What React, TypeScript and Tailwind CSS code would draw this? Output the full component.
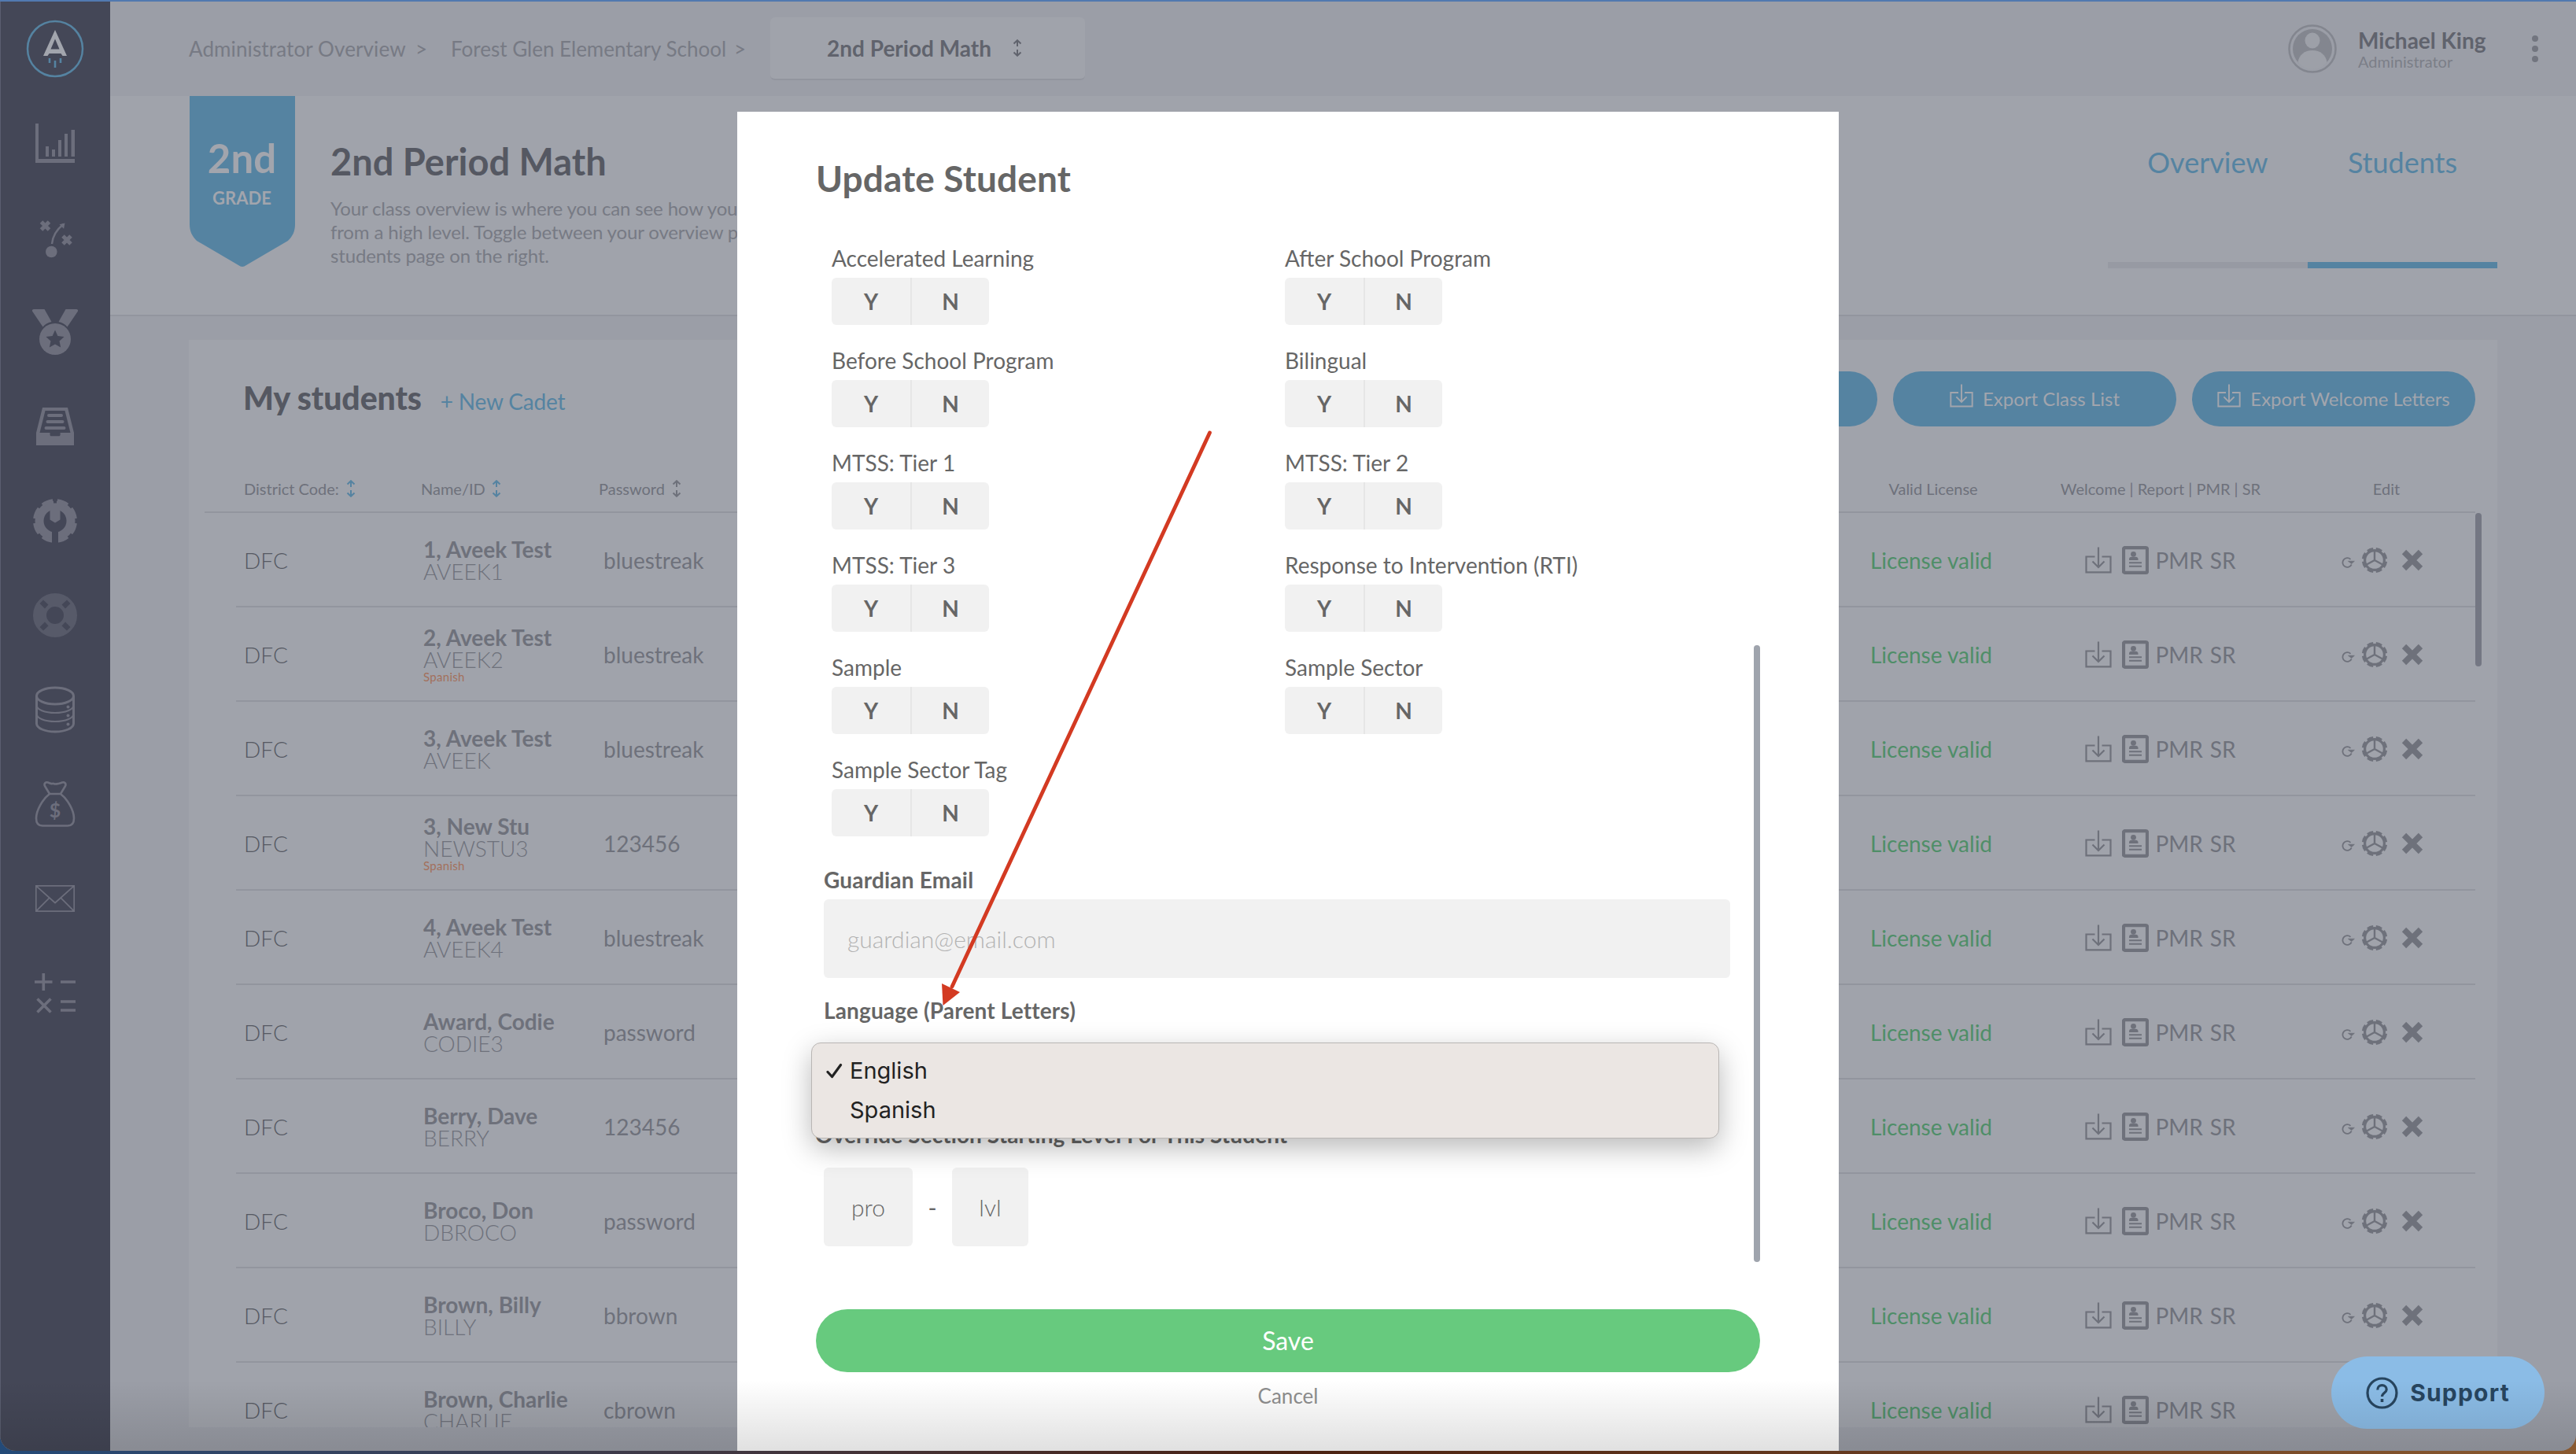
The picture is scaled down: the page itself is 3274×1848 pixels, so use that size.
import * as React from 'react';

interface Student {
  name: string;
  id: string;
  password: string;
  language?: string;
}

const students: Student[] = [
  { name: '1, Aveek Test', id: 'AVEEK1', password: 'bluestreak' },
  { name: '2, Aveek Test', id: 'AVEEK2', password: 'bluestreak', language: 'Spanish' },
  { name: '3, Aveek Test', id: 'AVEEK', password: 'bluestreak' },
  { name: '3, New Stu', id: 'NEWSTU3', password: '123456', language: 'Spanish' },
  { name: '4, Aveek Test', id: 'AVEEK4', password: 'bluestreak' },
  { name: 'Award, Codie', id: 'CODIE3', password: 'password' },
  { name: 'Berry, Dave', id: 'BERRY', password: '123456' },
  { name: 'Broco, Don', id: 'DBROCO', password: 'password' },
  { name: 'Brown, Billy', id: 'BILLY', password: 'bbrown' },
  { name: 'Brown, Charlie', id: 'CHARLIE', password: 'cbrown' },
];

const programs = [
  'Accelerated Learning',
  'After School Program',
  'Before School Program',
  'Bilingual',
  'MTSS: Tier 1',
  'MTSS: Tier 2',
  'MTSS: Tier 3',
  'Response to Intervention (RTI)',
  'Sample',
  'Sample Sector',
  'Sample Sector Tag',
];

const SortIcon = ({ className }: { className?: string }) => (
  <svg className={className} width="12" height="22" viewBox="0 0 12 22" fill="none" stroke="currentColor" strokeWidth="2">
    <path d="M6 9V1.5M1.5 5.5 6 1.2l4.500 4.300M6 13v7.500M1.500 16.500 6 20.800l4.500-4.300" />
  </svg>
);

const DownloadIcon = ({ size }: { size: number }) => (
  <svg width={size} height={size} viewBox="0 0 34 34" fill="none" stroke="currentColor" strokeWidth="2.2">
    <path d="M12.500 12.500H1.500v19.800h31V12.500h-11M17 0.500v25M9.500 18.500l7.500 7.500 7.500-7.500" />
  </svg>
);

const ReportIcon = () => (
  <svg width="34" height="36" viewBox="0 0 34 36" fill="currentColor">
    <rect x="2" y="2.200" width="30" height="31.600" rx="1.500" fill="none" stroke="currentColor" strokeWidth="4.200" />
    <circle cx="14.500" cy="10.300" r="3.400" />
    <path d="M9 18v-1.500c0-2 1.500-2.800 3-2.800h5.500c1.500 0 3 .8 3 2.800V18z" />
    <path d="M9 20.200h16v2H9zM9 24.700h16v2H9z" />
  </svg>
);

const GearIcon = () => (
  <svg width="34" height="34" viewBox="0 0 34 34" fill="none" stroke="currentColor">
    <circle cx="17" cy="17" r="12.400" strokeWidth="3.200" />
    <circle cx="17" cy="17" r="14.800" strokeWidth="2.800" pathLength="80" strokeDasharray="6.800 3.200" strokeDashoffset="-1.600" />
    <path d="M17 5v12.500M17 17l-11 6M17 17l11 6" strokeWidth="2.400" />
  </svg>
);

const RefreshIcon = () => (
  <svg width="17" height="14" viewBox="0 0 17 14" fill="none" stroke="currentColor" strokeWidth="1.800">
    <path d="M11.500 2.800A5.900 5.900 0 1 0 12.700 9.500" />
    <path d="M12.700 8.500 8.500 5.300h7.800z" fill="currentColor" strokeWidth="0.800" />
  </svg>
);

const CloseIcon = () => (
  <svg width="28" height="28" viewBox="0 0 28 28" stroke="currentColor" strokeWidth="7.500">
    <path d="M3.500 3.500l21 21M24.500 3.500l-21 21" />
  </svg>
);

const Logo = () => (
  <svg width="74" height="74" viewBox="0 0 74 74" fill="none">
    <circle cx="37" cy="37" r="35" stroke="#5583a1" strokeWidth="2.500" />
    <path d="M37 13 52 46H46.500L44.500 43H29.500L27.500 46H22zM37 24.500 31.500 37.500h11z" fill="#a2a5ad" fillRule="evenodd" />
    <path d="M30 49v6M37 52v9M44 49v6" stroke="#5583a1" strokeWidth="2.600" />
  </svg>
);

const NavIcon = ({ children, dim }: { children: React.ReactNode; dim?: boolean }) => (
  <div className="h-[120px] flex items-center justify-center">
    <svg
      width="60"
      height="60"
      viewBox="0 0 60 60"
      fill="none"
      stroke="none"
      className={dim ? 'text-[#575a69]' : 'text-[#6c6e7c]'}
    >
      {children}
    </svg>
  </div>
);

const Sidebar = () => (
  <aside className="w-[140px] shrink-0 pr-px bg-[#444757] border-l border-[#5a5e70]">
    <div className="h-[120px] flex items-center justify-center">
      <Logo />
    </div>
    <NavIcon>
      <path
        d="M5 5h4v45h46v5H5zM18 34h4v13h-4zM26 38h4v9h-4zM34 26h4v21h-4zM42 18h4v29h-4zM50.500 13h4.500v34h-4.500z"
        fill="currentColor"
      />
    </NavIcon>
    <NavIcon>
      <path d="M12.500 10l10 10M22.500 10l-10 10M40 28l10 10M50 28l-10 10" stroke="currentColor" strokeWidth="5" />
      <circle cx="25.300" cy="48" r="7.300" fill="currentColor" />
      <path d="M26 38C27 27 33 19 40.500 13" stroke="currentColor" strokeWidth="2.400" />
      <path d="M42.500 11.500l-7 1.800 5.600 5.400z" fill="currentColor" />
    </NavIcon>
    <NavIcon>
      <path d="M1 3.500C.5 2 1.500 1 3 1h13.500l9 16c-5 1-8.500 3.500-11 6.500zM59 3.500C59.500 2 58.500 1 57 1H43.500l-9 16c5 1 8.500 3.500 11 6.500z" fill="currentColor" />
      <circle cx="30" cy="39" r="20" fill="currentColor" />
      <path d="M30 27.500l3.400 7.500 8.100.9-6 5.500 1.700 8L30 45.400l-7.200 4 1.700-8-6-5.500 8.100-.9z" fill="#444757" />
    </NavIcon>
    <NavIcon>
      <path d="M14 6h32l8 32v16H6V38zM17.500 10 10.500 38h13v2.500c0 1 .8 1.800 1.800 1.800h9.500c1 0 1.800-.8 1.800-1.800V38h12.900L42.500 10z" fill="currentColor" fillRule="evenodd" />
      <path d="M22 16h16M20.500 24h19M18.500 32h23" stroke="currentColor" strokeWidth="4" strokeLinecap="round" />
    </NavIcon>
    <NavIcon>
      <circle cx="30" cy="30" r="20" stroke="currentColor" strokeWidth="11" />
      <circle cx="30" cy="30" r="25.500" stroke="currentColor" strokeWidth="5" pathLength="80" strokeDasharray="7 3" strokeDashoffset="-1.500" />
      <path d="M26 44h8v16h-8z" fill="#444757" />
      <path d="M23.500 6h13v22.500L30 32.500l-6.500-4z" fill="currentColor" />
      <path d="M30 1.500v6" stroke="#444757" strokeWidth="4" />
    </NavIcon>
    <NavIcon dim>
      <circle cx="30" cy="30" r="19.500" stroke="currentColor" strokeWidth="17" />
      <path
        d="M15 10.500l6.500 6-4.500 5-6.500-6.500zM45 10.500l-6.500 6 4.500 5 6.500-6.500zM15 49.500l6.500-6-4.500-5-6.500 6.500zM45 49.500l-6.500-6 4.500-5 6.500 6.500z"
        fill="#444757"
      />
    </NavIcon>
    <NavIcon>
      <ellipse cx="30" cy="12.500" rx="23.500" ry="10.500" stroke="currentColor" strokeWidth="3" />
      <path d="M6.500 12.500v35c0 6 10.500 10.500 23.500 10.500s23.500-4.500 23.500-10.500v-35" stroke="currentColor" strokeWidth="3" />
      <path d="M6.500 24c0 6 10.500 10 23.500 10s23.500-4 23.500-10M6.500 35c0 6 10.500 10 23.500 10s23.500-4 23.500-10" stroke="currentColor" strokeWidth="2" />
      <circle cx="46.500" cy="26.500" r="2" fill="currentColor" />
      <circle cx="46.500" cy="37.500" r="2" fill="currentColor" />
      <circle cx="46.500" cy="48.500" r="2" fill="currentColor" />
    </NavIcon>
    <NavIcon>
      <path
        d="M23 17 17 7c-1.500-3 1-5.500 4-4.500 3 1 3.500 2 5.500 1.500S29 4.500 30 4.500s2 0 4-.5 2.500-.5 5-1.500c3-1 5.500 1.500 4 4.500L37 17zM23 17C14 24 6 38 6 48c0 7 3 9.500 8 9.500h32c5 0 8-2.500 8-9.500 0-10-8-24-17-31"
        stroke="currentColor"
        strokeWidth="2.600"
      />
      <text x="30" y="47" textAnchor="middle" fill="currentColor" fontSize="25" fontWeight="700" fontFamily="Lato, sans-serif">
        $
      </text>
    </NavIcon>
    <NavIcon>
      <path d="M5.800 13.800h48.400v32.400H5.800zM5.800 13.800 30 35.500l24.200-21.700M5.800 46.200l17-17M54.200 46.200l-17-17" stroke="currentColor" strokeWidth="1.700" />
    </NavIcon>
    <NavIcon>
      <path d="M4 16h22.500M15.300 5v22M37 16h19M7.500 37.500l17 17M24.500 37.500l-17 17M37 41h19M37 52h19" stroke="currentColor" strokeWidth="3.600" />
    </NavIcon>
  </aside>
);

const Header = () => (
  <header className="h-[120px] shrink-0 flex items-center pl-[100px] pr-[48px] text-[26px] text-[#777a84]">
    <span className="w-[288px] tracking-[0.12px]">Administrator Overview</span>
    <span className="w-[45px]">&gt;</span>
    <span className="w-[360px]">Forest Glen Elementary School</span>
    <span className="w-[46px]">&gt;</span>
    <div className="w-[400px] h-[80px] flex items-center pl-[72px] rounded-md bg-[#a0a3ab] border-b-2 border-[#92959e] text-[28px] font-bold text-[#60636d]">
      <span className="w-[236px]">2nd Period Math</span>
      <SortIcon />
    </div>
    <div className="ml-auto flex items-center">
      <svg className="mr-[-1px]" width="62" height="62" viewBox="0 0 62 62" fill="none">
        <circle cx="31" cy="31" r="29.500" stroke="#83868f" strokeWidth="2.600" />
        <circle cx="31" cy="31" r="25" fill="#83868f" />
        <ellipse cx="31" cy="20.500" rx="9.500" ry="10" fill="#9da0a8" />
        <path d="M12.500 48C14 39 21 33 31 33s17 6 18.500 15C45 53.500 39 57 31 57s-14-3.500-18.500-9z" fill="#9da0a8" />
      </svg>
      <div className="ml-[28px] w-[221px]">
        <div className="text-[28px] leading-[32px] font-bold text-[#60636d]">Michael King</div>
        <div className="text-[20px] leading-[22px] text-[#7b7e88]">Administrator</div>
      </div>
      <div className="flex flex-col gap-[5px]">
        <div className="w-2 h-2 rounded-full bg-[#72757f]" />
        <div className="w-2 h-2 rounded-full bg-[#72757f]" />
        <div className="w-2 h-2 rounded-full bg-[#72757f]" />
      </div>
    </div>
  </header>
);

const Hero = () => (
  <section className="h-[280px] shrink-0 flex bg-[#a0a3ab] border-b-2 border-[#92959e] pl-[101px] pr-[100px]">
    <div className="relative w-[134px] h-[218px]">
      <svg className="absolute inset-0" width="134" height="218" viewBox="0 0 134 218">
        <path d="M0 0h134v163c0 9-3 15-9 21l-53 31q-5 4-10 0L9 184c-6-6-9-12-9-21z" fill="#5583a1" />
      </svg>
      <div className="relative pt-[49px] pr-px text-center font-bold text-[#a2a5ad]">
        <div className="text-[51px] leading-[60px]">2nd</div>
        <div className="mt-[6px] text-[22px] leading-[30px]">GRADE</div>
      </div>
    </div>
    <div className="ml-[45px] pt-[53px]">
      <h1 className="text-[47px] leading-[60px] font-bold text-[#555862]">2nd Period Math</h1>
      <p className="mt-[15px] w-[760px] text-[24px] leading-[30px] tracking-[-0.15px] text-[#777a84] whitespace-nowrap">
        Your class overview is where you can see how your class is doing
        <br />
        from a high level. Toggle between your overview page and
        <br />
        students page on the right.
      </p>
    </div>
    <nav className="ml-auto flex text-[36px] leading-[44px] text-[#5583a1] text-center">
      <div className="w-[254px] h-[219px] pt-[62px] border-b-8 border-[#979aa3]">Overview</div>
      <div className="w-[241px] h-[219px] pt-[62px] border-b-8 border-[#5583a1]">Students</div>
    </nav>
  </section>
);

const StudentRow = ({ student }: { student: Student }) => (
  <div className="ml-[60px] mr-[28px] h-[120px] shrink-0 flex items-center pl-[10px] pt-[2px] border-b-2 border-[#92959e] text-[28px] leading-[28px] text-[#6e717b]">
    <div className="w-[228px] font-light text-[#555862]">DFC</div>
    <div className="w-[229px]">
      <div className="font-bold">{student.name}</div>
      <div className="font-light">{student.id}</div>
      {student.language && <div className="text-[15px] leading-[16px] tracking-[0.3px] text-[#a3705c]">{student.language}</div>}
    </div>
    <div className="flex-1">{student.password}</div>
    <div className="w-[238px] pr-px text-center text-[#4f8e68]">License valid</div>
    <div className="w-[344px] flex items-center justify-center">
      <DownloadIcon size={34} />
      <span className="ml-[13px]">
        <ReportIcon />
      </span>
      <span className="ml-[8px]">PMR</span>
      <span className="ml-[9px]">SR</span>
    </div>
    <div className="w-[228px] flex items-center pl-[58px]">
      <span className="mt-[6px]">
        <RefreshIcon />
      </span>
      <span className="ml-[8px]">
        <GearIcon />
      </span>
      <span className="ml-[17px]">
        <CloseIcon />
      </span>
    </div>
  </div>
);

const Students = () => (
  <section className="relative mt-[30px] ml-[100px] mr-[100px] h-[1382px] shrink-0 flex flex-col overflow-hidden bg-[#a0a3ab]">
    <div className="mt-10 h-[70px] shrink-0 flex items-center pl-[69px] pr-[28px] gap-5">
      <div className="flex items-baseline mr-auto -mt-[2px]">
        <h2 className="text-[41px] leading-[50px] font-black tracking-[-0.1px] text-[#555862]">My students</h2>
        <a className="ml-[24px] text-[28px] tracking-[-0.2px] text-[#5583a1]">+ New Cadet</a>
      </div>
      <div className="w-[360px] h-[70px] rounded-full bg-[#5583a1]" />
      <button className="w-[360px] h-[70px] rounded-full bg-[#5583a1] flex items-center justify-center gap-3 text-[24px] text-[#a2a5ad]">
        <span className="-mt-2">
          <DownloadIcon size={30} />
        </span>
        Export Class List
      </button>
      <button className="w-[360px] h-[70px] rounded-full bg-[#5583a1] flex items-center justify-center gap-3 text-[24px] text-[#a2a5ad]">
        <span className="-mt-2">
          <DownloadIcon size={30} />
        </span>
        Export Welcome Letters
      </button>
    </div>
    <div className="mt-[60px] ml-5 mr-[28px] h-[50px] shrink-0 flex items-center pl-[50px] pb-[11px] border-b-2 border-[#92959e] text-[20px] text-[#6e717b]">
      <div className="w-[225px] flex items-center gap-[9px]">
        District Code: <SortIcon className="text-[#5583a1]" />
      </div>
      <div className="w-[226px] flex items-center gap-[8px]">
        Name/ID <SortIcon className="text-[#5583a1]" />
      </div>
      <div className="flex-1 flex items-center gap-[9px]">
        Password <SortIcon />
      </div>
      <div className="w-[238px] pl-[4px] text-center">Valid License</div>
      <div className="w-[344px] text-center">Welcome | Report | PMR | SR</div>
      <div className="w-[228px] pl-[2px] text-center">Edit</div>
    </div>
    {students.map((student) => (
      <StudentRow key={student.name} student={student} />
    ))}
    <div className="absolute top-[220px] right-[20px] w-2 h-[195px] rounded-full bg-[#747783]" />
  </section>
);

const YesNo = ({ label }: { label: string }) => (
  <div className="w-[576px] h-[130px]">
    <div className="text-[28px] leading-[36px] text-[#666]">{label}</div>
    <div className="mt-[7px] w-[200px] h-[60px] flex rounded-md overflow-hidden bg-[#f1f1f1] text-[28px] font-bold text-[#666]">
      <button className="w-[102px] border-r-2 border-[#e6e6e6]">Y</button>
      <button className="flex-1">N</button>
    </div>
  </div>
);

const LanguageMenu = () => (
  <div className="absolute left-[94px] top-[1183px] w-[1154px] h-[122px] pt-[10px] rounded-xl bg-[#ebe6e3] border border-[#b9b6b4] shadow-[0_12px_36px_rgba(0,0,0,0.28)] font-['Inter',sans-serif] text-[29px] leading-[50px] text-[#222]">
    <div className="flex items-center pl-[18px]">
      <svg className="mr-[9px]" width="21" height="20" viewBox="0 0 21 20" fill="none" stroke="currentColor" strokeWidth="3.200" strokeLinecap="round" strokeLinejoin="round">
        <path d="M2 11.500 7.500 17.500 18.500 2.500" />
      </svg>
      English
    </div>
    <div className="pl-[48px]">Spanish</div>
  </div>
);

const UpdateStudentModal = () => (
  <div className="absolute left-[937px] top-[142px] w-[1400px] h-[1702px] bg-white px-[100px] pt-[55px] text-[28px] text-[#666]">
    <h2 className="text-[46px] leading-[60px] font-bold tracking-[0.15px]">Update Student</h2>
    <div className="mt-[53px] pl-5 flex flex-wrap">
      {programs.map((label) => (
        <YesNo key={label} label={label} />
      ))}
    </div>
    <div className="pl-[10px]">
      <div className="mt-[10px] leading-[36px] font-bold tracking-[0.2px]">Guardian Email</div>
      <div className="mt-[7px] w-[1152px] h-[100px] flex items-center pl-[30px] rounded-md bg-[#f1f1f1] text-[30px] font-light text-[#b3b3b3]">
        guardian@email.com
      </div>
      <div className="mt-[23px] leading-[36px] font-bold tracking-[0.15px]">Language (Parent Letters)</div>
    </div>
    <div className="mt-[122px] -ml-px leading-[36px] font-bold tracking-[0.08px]">
      Override Section Starting Level For This Student
    </div>
    <div className="mt-[24px] pl-[10px] flex items-center text-[30px] font-light">
      <div className="w-[113px] h-[100px] flex items-center justify-center rounded-md bg-[#f1f1f1]">pro</div>
      <span className="w-[50px] text-center font-normal">-</span>
      <div className="w-[97px] h-[100px] flex items-center justify-center rounded-md bg-[#f1f1f1]">lvl</div>
    </div>
    <button className="mt-[80px] w-[1200px] h-[80px] rounded-full bg-[#67ca7e] text-[32px] text-white">Save</button>
    <div className="mt-[12px] text-center text-[26px] leading-[36px] text-[#8e8e8e]">Cancel</div>
    <div className="absolute left-[1292px] top-[678px] w-2 h-[784px] rounded-full bg-[#9fa4ad]" />
    <LanguageMenu />
  </div>
);

const SupportButton = () => (
  <button className="absolute left-[2963px] top-[1724px] w-[271px] h-[92px] rounded-full bg-[#8bbce6] flex items-center justify-center gap-[15px] font-['Inter',sans-serif] text-[30px] font-bold tracking-[1.2px] text-[#27455f]">
    <svg width="41" height="41" viewBox="0 0 41 41" fill="none" stroke="currentColor" strokeWidth="3.200">
      <circle cx="20.500" cy="20.500" r="18.500" />
      <path d="M14.800 16.500c0-3.700 2.500-5.800 5.700-5.800s5.700 2.100 5.700 5.200c0 4.300-5.700 4.300-5.700 9.100" />
      <path d="M20.500 28v4" strokeWidth="3.600" />
    </svg>
    Support
  </button>
);

export default function App() {
  return (
    <div className="relative w-[3274px] h-[1848px] overflow-hidden bg-linear-to-r from-[#234a78] via-[#4a2212] to-[#8a5a30] font-['Lato',sans-serif]">
      <div className="relative h-[1844px] flex overflow-hidden rounded-b-[20px] border-t-2 border-[#5179b0] bg-[#9b9ea7]">
        <Sidebar />
        <main className="flex-1 flex flex-col">
          <Header />
          <Hero />
          <Students />
        </main>
      </div>
      <UpdateStudentModal />
      <svg className="absolute left-[1190px] top-[540px]" width="360" height="745" viewBox="0 0 360 745">
        <path d="M347.500 10 20 714" stroke="#d33a22" strokeWidth="4.800" strokeLinecap="round" />
        <path d="M8.500 738 7 710l23 11z" fill="#d33a22" />
      </svg>
      <SupportButton />
      <div className="absolute left-0 top-[1754px] w-full h-[90px] rounded-b-[20px] bg-linear-to-b from-transparent to-black/12" />
    </div>
  );
}
